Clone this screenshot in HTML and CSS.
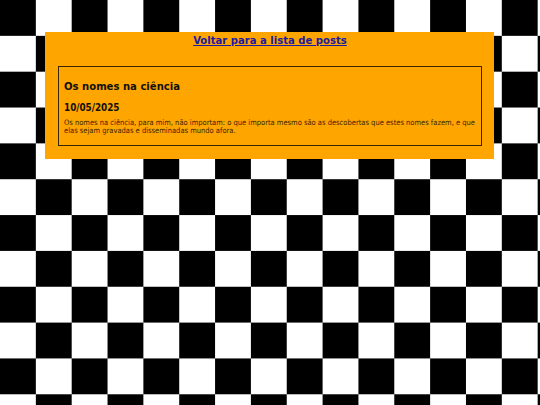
FILE: index.html
```html
<!DOCTYPE html>
<html lang="pt-BR">
<head>
<meta charset="utf-8">
<title>Os nomes na ciência</title>
<link rel="stylesheet" href="styles.css">
</head>
<body>
<main class="page">
  <nav class="back"><a href="#">Voltar para a lista de posts</a></nav>
  <article class="post">
    <h1 class="post-title">Os nomes na ciência</h1>
    <h3 class="post-date">10/05/2025</h3>
    <p class="post-body">Os nomes na ciência, para mim, não importam: o que importa mesmo são as descobertas que estes nomes fazem, e que elas sejam gravadas e disseminadas mundo afora.</p>
  </article>
</main>
</body>
</html>
```
FILE: styles.css
```css
html, body {
  margin: 0;
  padding: 0;
}
body {
  width: 540px;
  height: 405px;
  overflow: hidden;
  font-family: "DejaVu Sans Condensed", "DejaVu Sans", sans-serif;
  background-color: #fff;
  background-image: conic-gradient(#fff 0 25%, #000 0 50%, #fff 0 75%, #000 0);
  background-size: 71.7px 71.7px;
  background-position: 0 0;
}
.page {
  width: 449px;
  margin: 32px 0 0 45px;
  background: #ffa500;
  padding: 2px 12px 13px 13px;
  box-sizing: border-box;
}
.back {
  text-align: center;
  font-size: 11.2px;
  font-weight: bold;
  line-height: 14px;
}
.back a {
  color: #1d1aa0;
}
.post {
  margin-top: 18px;
  border: 1px solid #3a2700;
  padding: 12px 5px 10px 5px;
}
.post-title {
  margin: 0;
  font-size: 11.2px;
  line-height: 16px;
  color: #111;
}
.post-date {
  margin: 6px 0 0;
  font-size: 9.8px;
  line-height: 13px;
  color: #111;
}
.post-body {
  margin: 5px 0 0;
  font-size: 7.5px;
  line-height: 8px;
  color: #3a2400;
}
```
